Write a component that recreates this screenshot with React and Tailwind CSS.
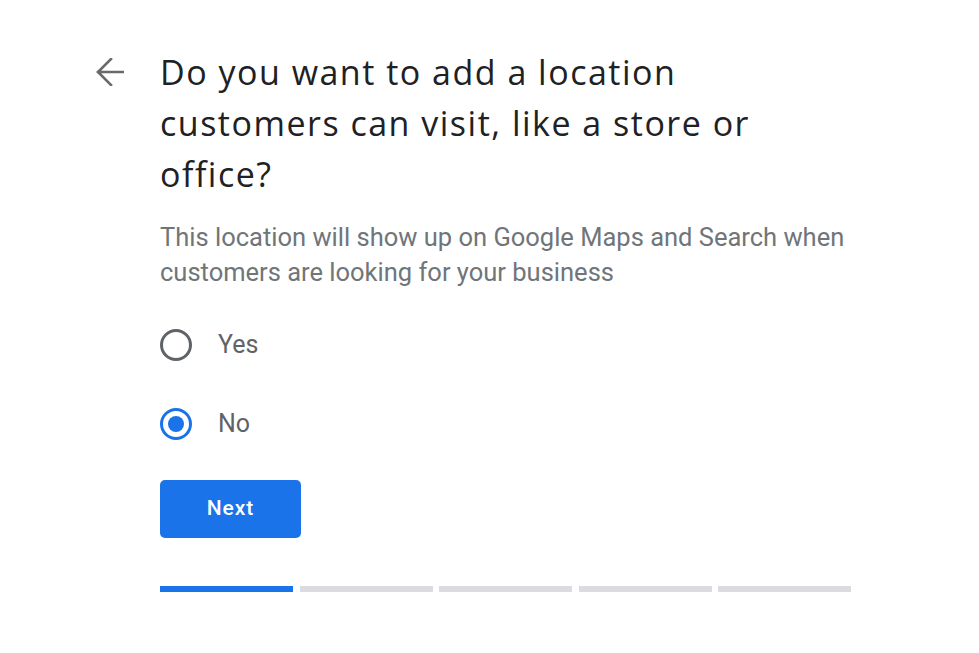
import React from "react";

export default function App() {
  return (
    <div className="w-[979px] h-[653px] bg-white flex pl-[96px] pt-[47px]">
      <div className="w-[64px] shrink-0 pt-[11px]">
        <svg width="28" height="28" viewBox="0 0 28 28">
          <path d="M2 14H27M15 1L2 14l13 13" fill="none" stroke="#6a6a6a" strokeWidth="2.6" strokeLinecap="square" strokeLinejoin="miter" />
        </svg>
      </div>
      <div className="w-[691px] flex flex-col">
        <h1 className="text-[34px] leading-[51px] text-[#202124] tracking-[1.5px] pr-[70px]" style={{ fontFamily: '"Open Sans", Lato, sans-serif' }}>
          Do you want to add a location customers can visit, like a store or office?
        </h1>
        <p className="mt-[20px] text-[25.5px] leading-[35px] text-[#70757a]" style={{ fontFamily: 'Roboto, "Liberation Sans", sans-serif' }}>
          This location will show up on Google Maps and Search when customers are looking for your business
        </p>
        <div className="mt-[39px] flex flex-col gap-[47px]" style={{ fontFamily: 'Roboto, "Liberation Sans", sans-serif' }}>
          <label className="flex items-center gap-[26px] h-[32px]">
            <span className="w-[32px] h-[32px] rounded-full border-[3px] border-[#5f6368] box-border" />
            <span className="text-[25px] text-[#5f6368]">Yes</span>
          </label>
          <label className="flex items-center gap-[26px] h-[32px]">
            <span className="w-[32px] h-[32px] rounded-full border-[3px] border-[#1a73e8] box-border flex items-center justify-center">
              <span className="w-[16px] h-[16px] rounded-full bg-[#1a73e8]" />
            </span>
            <span className="text-[25px] text-[#5f6368]">No</span>
          </label>
        </div>
        <button className="mt-[40px] w-[141px] h-[58px] rounded-[5px] bg-[#1a73e8] text-white text-[21px] font-medium tracking-[1px]" style={{ fontFamily: 'Roboto, "Liberation Sans", sans-serif' }}>
          Next
        </button>
        <div className="mt-[48px] flex gap-[6.5px] h-[6px]">
          <div className="flex-1 bg-[#1a73e8]" />
          <div className="flex-1 bg-[#dadce0]" />
          <div className="flex-1 bg-[#dadce0]" />
          <div className="flex-1 bg-[#dadce0]" />
          <div className="flex-1 bg-[#dadce0]" />
        </div>
      </div>
    </div>
  );
}
